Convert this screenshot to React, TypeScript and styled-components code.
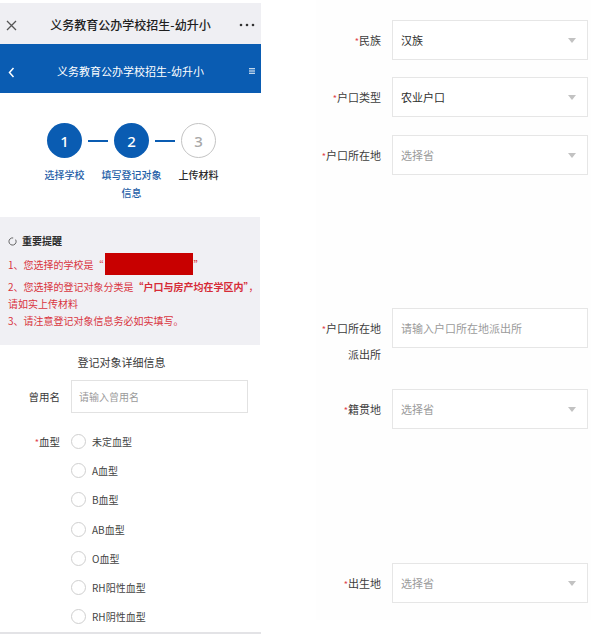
import React from "react";
import styled, { createGlobalStyle } from "styled-components";

const GlobalStyle = createGlobalStyle`
  html, body { margin: 0; padding: 0; background: #fff; }
  body { font-family: "Noto Sans CJK SC", "Noto Sans", sans-serif; }
  * { box-sizing: border-box; }
`;

const BLUE = "#0a5cb2";
const RED = "#d9343e";

const Page = styled.div`
  display: flex;
  align-items: flex-start;
  width: 591px;
  height: 635px;
  overflow: hidden;
  background: #fff;
`;

const Phone = styled.div`
  width: 261px;
  height: 634px;
  flex: none;
  padding-top: 3px;
  display: flex;
  flex-direction: column;
  overflow: hidden;
  border-bottom: 2px solid #e3e3e6;
`;

const TopBar = styled.div`
  height: 41px;
  flex: none;
  background: #efeff3;
  display: grid;
  grid-template-columns: 30px 1fr 30px;
  align-items: center;
  padding-top: 3px;
`;

const TopTitle = styled.div`
  text-align: center;
  font-size: 12px;
  line-height: 16px;
  color: #1e1e1e;
  font-weight: 500;
  white-space: nowrap;
`;

const IconCell = styled.div<{ $align: "start" | "end" }>`
  display: flex;
  justify-content: ${(p) => (p.$align === "start" ? "flex-start" : "flex-end")};
  align-items: center;
  padding: ${(p) => (p.$align === "start" ? "0 0 0 6px" : "0 6px 0 0")};
`;

const BlueBar = styled.div`
  height: 49px;
  flex: none;
  background: ${BLUE};
  display: grid;
  grid-template-columns: 30px 1fr 30px;
  align-items: center;
  padding-top: 5px;
`;

const BlueTitle = styled.div`
  text-align: center;
  font-size: 11px;
  line-height: 16px;
  color: #fff;
  white-space: nowrap;
`;

const Steps = styled.div`
  height: 124px;
  flex: none;
  display: flex;
  justify-content: center;
  align-items: flex-start;
  padding-top: 30px;
  padding-left: 2px;
`;

const Step = styled.div`
  width: 35px;
  display: flex;
  flex-direction: column;
  align-items: center;
`;

const Circle = styled.div<{ $done: boolean }>`
  width: 35px;
  height: 35px;
  border-radius: 50%;
  display: flex;
  align-items: center;
  justify-content: center;
  font-family: "Noto Sans", sans-serif;
  font-size: 15px;
  font-weight: 500;
  background: ${(p) => (p.$done ? BLUE : "#fff")};
  color: ${(p) => (p.$done ? "#fff" : "#a8a8a8")};
  border: ${(p) => (p.$done ? "none" : "1.5px solid #c4c4c4")};
`;

const StepLabel = styled.div<{ $done: boolean }>`
  width: 64px;
  flex: none;
  margin-top: 8px;
  text-align: center;
  font-size: 10px;
  line-height: 18px;
  font-weight: 500;
  color: ${(p) => (p.$done ? "#1f5fa8" : "#2a2a2a")};
`;

const Connector = styled.div`
  width: 20px;
  height: 2px;
  margin: 17px 6px 0 6px;
  background: ${BLUE};
  flex: none;
`;

const Notice = styled.div`
  height: 128px;
  flex: none;
  width: 260px;
  background: #f0f0f4;
  padding: 16px 0 0 8px;
`;

const NoticeHead = styled.div`
  display: flex;
  align-items: center;
  gap: 5px;
  font-size: 10px;
  line-height: 16px;
  font-weight: 700;
  color: #2e2e2e;
`;

const NoticeLines = styled.div`
  margin-top: 4px;
  color: ${RED};
  font-size: 10px;
  line-height: 17px;
  white-space: nowrap;
`;

const FirstLine = styled.div`
  display: flex;
  align-items: center;
  height: 22px;
  margin-bottom: 3px;
`;

const Redacted = styled.span`
  display: inline-block;
  width: 88px;
  height: 22px;
  background: #c80000;
  margin: 0 1px;
`;

const Strong = styled.b`
  font-weight: 700;
  color: #d62b37;
`;

const SectionTitle = styled.div`
  padding-top: 8px;
  text-align: center;
  font-size: 11px;
  line-height: 18px;
  color: #3a3a3a;
  padding-right: 18px;
`;

const PhoneRow = styled.div<{ $top: number }>`
  display: grid;
  grid-template-columns: 60px 177px;
  column-gap: 11px;
  align-items: start;
  margin-top: ${(p) => p.$top}px;
`;

const PhoneLabel = styled.div<{ $h: number }>`
  text-align: right;
  font-size: 10.5px;
  line-height: ${(p) => p.$h}px;
  color: #3a3a3a;
  white-space: nowrap;
`;

const Star = styled.span`
  color: #e0444c;
  font-size: 9px;
`;

const TextInput = styled.div`
  height: 33px;
  border: 1px solid #e2e2e2;
  background: #fff;
  display: flex;
  align-items: center;
  padding-left: 7px;
  font-size: 10px;
  color: #9a9a9a;
`;

const RadioList = styled.div`
  display: flex;
  flex-direction: column;
`;

const RadioItem = styled.div`
  height: 29.2px;
  display: flex;
  align-items: center;
  gap: 6px;
  font-size: 10px;
  color: #444;
`;

const RadioDot = styled.span`
  width: 15px;
  height: 15px;
  border-radius: 50%;
  border: 1px solid #cfcfcf;
  background: #fff;
  flex: none;
`;

const RightPanel = styled.div`
  margin-left: 55px;
  width: 275px;
  height: 620px;
  background: #fefefe;
  display: flex;
  flex-direction: column;
`;

const FormRow = styled.div<{ $top: number }>`
  display: flex;
  align-items: flex-start;
  gap: 11px;
  margin-top: ${(p) => p.$top}px;
`;

const FormLabel = styled.div`
  width: 65px;
  flex: none;
  text-align: right;
  padding-top: 8px;
  font-size: 11px;
  line-height: 24px;
  color: #3c3c3c;
  white-space: nowrap;
`;

const Field = styled.div<{ $placeholder?: boolean }>`
  width: 196px;
  height: 40px;
  flex: none;
  background: #fff;
  border: 1px solid #e6e6e6;
  display: flex;
  align-items: center;
  justify-content: space-between;
  padding: 0 8px 0 8px;
  font-size: 11px;
  color: ${(p) => (p.$placeholder ? "#9b9b9b" : "#2e2e2e")};
`;

const Caret = styled.span`
  width: 0;
  height: 0;
  border-left: 4px solid transparent;
  border-right: 4px solid transparent;
  border-top: 5px solid #c2c2c2;
  margin-right: 3px;
`;

const CloseIcon = () => (
  <svg width="11" height="11" viewBox="0 0 11 11">
    <path d="M1 1 L10 10 M10 1 L1 10" stroke="#555" strokeWidth="1.3" fill="none" />
  </svg>
);

const MoreIcon = () => (
  <svg width="16" height="4" viewBox="0 0 16 4">
    <circle cx="2" cy="2" r="1.3" fill="#333" />
    <circle cx="8" cy="2" r="1.3" fill="#333" />
    <circle cx="14" cy="2" r="1.3" fill="#333" />
  </svg>
);

const BackIcon = () => (
  <svg width="7" height="11" viewBox="0 0 7 11">
    <path d="M5.5 1 L1.5 5.5 L5.5 10" stroke="#fff" strokeWidth="1.5" fill="none" />
  </svg>
);

const MenuIcon = () => (
  <svg width="6" height="6" viewBox="0 0 6 6">
    <path d="M0 0.75 H6 M0 3 H6 M0 5.25 H6" stroke="#fff" strokeWidth="1.1" />
  </svg>
);

const LoadingIcon = () => (
  <svg width="9" height="9" viewBox="0 0 9 9">
    <path d="M7.6 2.6 A3.6 3.6 0 1 1 5.2 0.95" stroke="#555" strokeWidth="0.9" fill="none" />
  </svg>
);

const steps = [
  { n: "1", label: "选择学校", done: true },
  { n: "2", label: "填写登记对象信息", done: true },
  { n: "3", label: "上传材料", done: false },
];

const bloodTypes = ["未定血型", "A血型", "B血型", "AB血型", "O血型", "RH阳性血型", "RH阴性血型"];

const fields: { label: React.ReactNode; value: string; placeholder?: boolean; select: boolean; top: number }[] = [
  { label: "民族", value: "汉族", select: true, top: 20 },
  { label: "户口类型", value: "农业户口", select: true, top: 17 },
  { label: "户口所在地", value: "选择省", placeholder: true, select: true, top: 18 },
  {
    label: (
      <>
        户口所在地
        <br />
        派出所
      </>
    ),
    value: "请输入户口所在地派出所",
    placeholder: true,
    select: false,
    top: 133,
  },
  { label: "籍贯地", value: "选择省", placeholder: true, select: true, top: 23 },
  { label: "出生地", value: "选择省", placeholder: true, select: true, top: 134 },
];

export default function App() {
  return (
    <>
      <GlobalStyle />
      <Page>
        <Phone>
          <TopBar>
            <IconCell $align="start">
              <CloseIcon />
            </IconCell>
            <TopTitle>义务教育公办学校招生-幼升小</TopTitle>
            <IconCell $align="end">
              <MoreIcon />
            </IconCell>
          </TopBar>
          <BlueBar>
            <IconCell $align="start">
              <span style={{ paddingLeft: 2 }}>
                <BackIcon />
              </span>
            </IconCell>
            <BlueTitle>义务教育公办学校招生-幼升小</BlueTitle>
            <IconCell $align="end">
              <MenuIcon />
            </IconCell>
          </BlueBar>
          <Steps>
            {steps.map((s, i) => (
              <React.Fragment key={s.n}>
                {i > 0 && <Connector />}
                <Step>
                  <Circle $done={s.done}>{s.n}</Circle>
                  <StepLabel $done={s.done}>
                    {s.label.length > 6 ? (
                      <>
                        {s.label.slice(0, 6)}
                        <br />
                        {s.label.slice(6)}
                      </>
                    ) : (
                      s.label
                    )}
                  </StepLabel>
                </Step>
              </React.Fragment>
            ))}
          </Steps>
          <Notice>
            <NoticeHead>
              <LoadingIcon />
              重要提醒
            </NoticeHead>
            <NoticeLines>
              <FirstLine>
                1、您选择的学校是“<Redacted />”
              </FirstLine>
              <div>
                2、您选择的登记对象分类是<Strong>“户口与房产均在学区内”</Strong>，
              </div>
              <div>请如实上传材料</div>
              <div>3、请注意登记对象信息务必如实填写。</div>
            </NoticeLines>
          </Notice>
          <SectionTitle>登记对象详细信息</SectionTitle>
          <PhoneRow $top={9}>
            <PhoneLabel $h={33}>曾用名</PhoneLabel>
            <TextInput>请输入曾用名</TextInput>
          </PhoneRow>
          <PhoneRow $top={14}>
            <PhoneLabel $h={29}>
              <Star>*</Star>血型
            </PhoneLabel>
            <RadioList>
              {bloodTypes.map((b) => (
                <RadioItem key={b}>
                  <RadioDot />
                  {b}
                </RadioItem>
              ))}
            </RadioList>
          </PhoneRow>
        </Phone>
        <RightPanel>
          {fields.map((f, i) => (
            <FormRow key={i} $top={f.top}>
              <FormLabel>
                <Star>*</Star>
                {f.label}
              </FormLabel>
              <Field $placeholder={f.placeholder}>
                {f.value}
                {f.select && <Caret />}
              </Field>
            </FormRow>
          ))}
        </RightPanel>
      </Page>
    </>
  );
}
